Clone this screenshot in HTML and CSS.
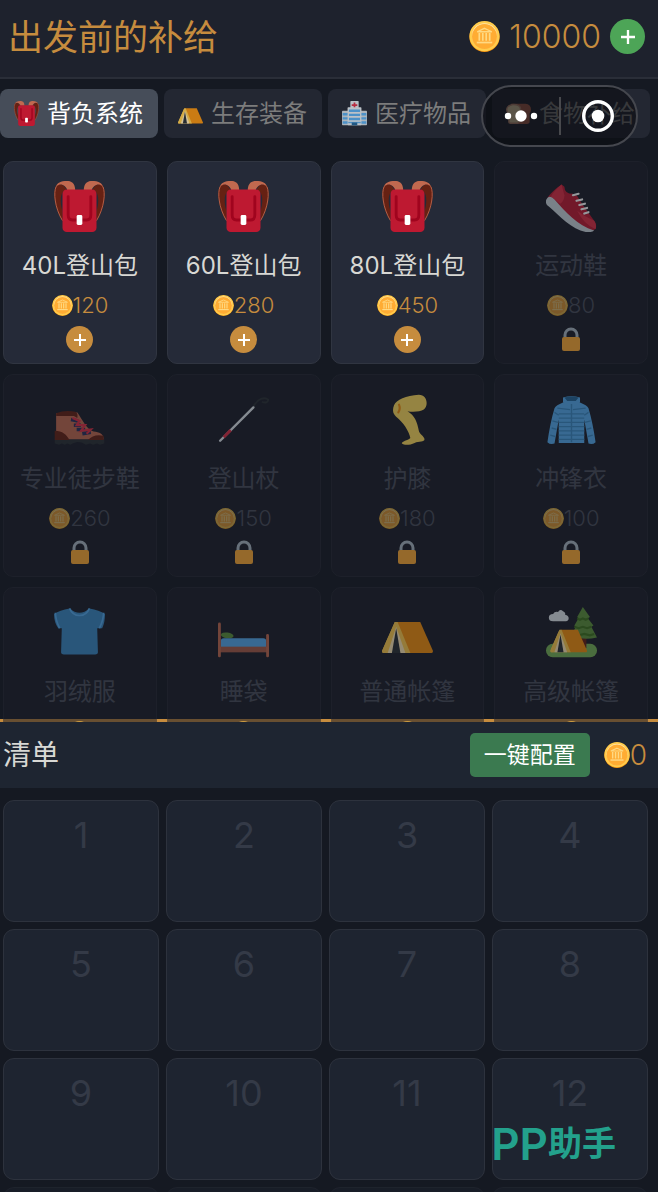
FILE: index.html
```html
<!DOCTYPE html>
<html lang="zh-CN">
<head>
    <meta charset="UTF-8">
    <meta name="viewport" content="width=device-width, initial-scale=1.0">
    <title>出发前的补给</title>
    <link rel="stylesheet" href="styles.css">
</head>
<body>
    <!-- Icon sprite -->
    <svg class="sprite" aria-hidden="true">
        <symbol id="coin" viewBox="0 0 36 36">
            <circle cx="18" cy="18.5" r="17.5" fill="#F4900C"/>
            <circle cx="18" cy="17.5" r="17.5" fill="#FFCC4D"/>
            <circle cx="18" cy="17" r="14.5" fill="#FFE8B6"/>
            <circle cx="18" cy="18" r="14.5" fill="#FFAC33"/>
            <path d="M18 8.5l8.5 4h-17z" fill="none" stroke="#FFD983" stroke-width="1.5"/>
            <path d="M12 14v9M16 14v9M20 14v9M24 14v9" stroke="#FFD983" stroke-width="2"/>
            <path d="M9 25h18" stroke="#FFD983" stroke-width="2"/>
        </symbol>
        <symbol id="strap" viewBox="0 0 36 36">
            <path d="M2 3C0 5 0 10 .5 13C1.5 20 4 25 6 28V21C4.500 17 4 10 6.500 7.500L9 7C8 3 4 1 2 3z" fill="#662113"/>
            <path d="M1 5C2 1 5 0 9 0C12 0 15 1 15 7H9.500C9 4 6 2 4 2.500Q2 3 1 5z" fill="#C1694F"/>
            <path d="M1.500 4C-.5 8 .5 19 6 28" fill="none" stroke="#C1694F" stroke-width=".6"/>
        </symbol>
        <symbol id="backpack" viewBox="0 0 36 36">
            <use href="#strap" width="36" height="36"/>
            <g transform="translate(36 0) scale(-1 1)"><use href="#strap" width="36" height="36"/></g>
            <rect x="6" y="6" width="24" height="30" rx="3" fill="#BE1931"/>
            <path d="M10 11v13q0 3.500 3 3.500h10q3 0 3-3.500V11" fill="none" stroke="#A0041E" stroke-width="2" stroke-linecap="round"/>
            <rect x="16" y="24" width="4" height="7" rx="1" fill="#fff"/>
        </symbol>
        <symbol id="tent" viewBox="0 0 36 36">
            <path d="M10 10.500h17L36 31q0 1.500-1 1.500H17z" fill="#F4900C"/>
            <path d="M9 10.500h2L20 32.500H1Q0 32.500 0 31z" fill="#FFCC4D"/>
            <path d="M10 14L4 32.500h12.500z" fill="#FFE8B6"/>
            <path d="M10 15L7 32.500h6z" fill="#292F33"/>
            <path d="M9 10.500L0 31q0 1.500 1 1.500h2.500L10 13z" fill="#FFCC4D"/>
        </symbol>
        <symbol id="hospital" viewBox="0 0 36 36">
            <rect x="12" y="0" width="12" height="12" rx="1" fill="#E1E8ED"/>
            <path d="M18 2v8M14 6h8" stroke="#DD2E44" stroke-width="2.500"/>
            <rect x="0" y="14" width="36" height="21" rx="1" fill="#CCD6DD"/>
            <rect x="8" y="9" width="20" height="26" rx="1" fill="#E1E8ED"/>
            <path d="M10 14h16M10 20h16M10 26h16M1 19h7M1 25h7M1 31h7M28 19h7M28 25h7M28 31h7" stroke="#55ACEE" stroke-width="3.400"/>
            <rect x="9" y="30" width="18" height="2" fill="#5DADEC"/>
            <rect x="14" y="31" width="8" height="4" fill="#226699"/>
        </symbol>
        <symbol id="bread" viewBox="0 0 36 36">
            <path d="M7 4H28Q36 5 36 12Q36 16 34 18V30Q34 33 30 33H10z" fill="#C1694F"/>
            <path d="M10 4Q22 4 22 12Q22 16 20 18V30Q20 33 17 33H6Q3 33 3 30V19Q0 17 0 12Q1 5 10 4z" fill="#D99E82"/>
            <path d="M10 6Q20 6 20 12Q20 15 18 17V29Q18 31 16 31H7Q5 31 5 29V18Q2 16 2 12Q3 7 10 6z" fill="#FFE8B6"/>
        </symbol>
        <symbol id="sneaker" viewBox="0 0 36 36">
            <path d="M11 2.500C7 5 3 9 1 12C8 20 20 34 33 35C36 34 36 31 34 28L26 17L22 10.500L19 9Q13 9 13 4z" fill="#BE1931"/>
            <path d="M11 2.500C8 5 5 8 3.500 11L10 16Q13 14 13 10z" fill="#DD2E44"/>
            <path d="M22 21Q27 25 34 28Q36 31 35 34Q27 31 22 21z" fill="#DD2E44"/>
            <path d="M1 12C-1 14 0 17 2 18C10 25 18 34 28 36Q32 36.500 34 35C22 31 14 22 6 13Q3 10 1 12z" fill="#CCD6DD"/>
            <path d="M19 10l4-1M21.500 14l4-1M23.500 17l4-1M25 20l4-1M27 23l3-1" stroke="#fff" stroke-width="1.500" stroke-linecap="round"/>
        </symbol>
        <symbol id="boot" viewBox="0 0 36 36">
            <path d="M.5 32h35v3l-3 .8-2-.8-3 .8-2-.8-3 .8-3-1.500-3-.5-3 1-2 1-2-.8-2 .8-2-.8-2 .8-3-.8z" fill="#292F33"/>
            <path d="M1.500 13.500V32H35C35 28 32 27 28 26.500C23 25 20 18 16.500 13z" fill="#C1694F"/>
            <path d="M1.500 13.500Q8 11 15 12.500Q17 13 16.500 17L14 15.500H1.500zM.5 26C6 26 9 29 11 32.500H.5zM24 32.500Q28 28 35 29.500V32.500z" fill="#662113"/>
            <path d="M12 18l5 1M14 22l5 0M16 25l6 0M20 28l6-1" stroke="#292F5B" stroke-width="2.500"/>
            <path d="M13 17l5 2-2 3 6 0-3 4 7-1-3 3" fill="none" stroke="#DD2E44" stroke-width="1.500"/>
        </symbol>
        <symbol id="cane" viewBox="0 0 36 36">
            <path d="M25 9C28 3 33 2 35.500 4Q35 7 31 5.500" fill="none" stroke="#292F33" stroke-width="1.300"/>
            <path d="M1.500 33L25 9.500" stroke="#E1E8ED" stroke-width="1.700" stroke-linecap="round"/>
            <path d="M4 30.500L9 25.500" stroke="#DD2E44" stroke-width="2"/>
        </symbol>
        <symbol id="leg" viewBox="0 0 36 36">
            <path d="M26 .5C17 1 10 4 8.500 8C7 12 8 14 10 16C15 20 19 26 20 31C18 33 14 33 14 35C16 36.500 20 36 23 34.500C26 33.500 30 34 30 32C30 30 26 28 26 26C25 20 23 15 18 12.200C22 13 27 12.500 29.500 11C33 8 32 .5 26 .5z" fill="#FFDC5D"/>
            <path d="M12 7.500q1.200 3-.5 5.500" fill="none" stroke="#F4900C" stroke-width="1.500" stroke-linecap="round"/>
        </symbol>
        <symbol id="jacket" viewBox="0 0 36 36">
            <path d="M12 6Q7 8 6 10Q3 20 1 34Q3 36 6 35L9 18V34.500H27V18L30 35Q33 36 35 34Q33 20 30 10Q29 8 24 6z" fill="#55ACEE"/>
            <path d="M12 2.500Q18 .5 24 2.500V6Q18 11 12 6z" fill="#55ACEE"/>
            <path d="M13 2.500Q18 1 23 2.500L21 5H15z" fill="#226699"/>
            <path d="M18 7V34M8 10l9 1M19 11l9-1M9 14h18M9 17h18M9 20h18M9 23h18M9 26h18M9 29h18M9 32h18M6 13l3 2M4.500 19l4 1M4 24l3.500 1M3 29l3.500 1M30 13l-3 2M31.500 19l-4 1M32 24l-3.500 1M33 29l-3.500 1" stroke="#3B88C3" stroke-width="1"/>
        </symbol>
        <symbol id="shirt" viewBox="0 0 36 36">
            <path d="M11 1Q18 7 25 1Q32 2 36 5Q36 11 34 15H30.500L31 32Q31 33.500 29 33.500H7Q5 33.500 5 32L5.500 15H3Q0 11 0 5Q4 2 11 1z" fill="#3B88C3"/>
            <path d="M11 1Q13 6 18 6Q23 6 25 1M1 4Q1 9 4 15M35 4Q35 9 32 15" fill="none" stroke="#55ACEE" stroke-width="1.200"/>
        </symbol>
        <symbol id="bed" viewBox="0 0 36 36">
            <ellipse cx="6.500" cy="20" rx="4.500" ry="2" fill="#5C913B" transform="rotate(8 6.500 20)"/>
            <path d="M2 24q0-2 2-2h28q2 0 2 2v5H2z" fill="#55ACEE"/>
            <rect x="1" y="28" width="34" height="4" fill="#A85B47"/>
            <rect x="0" y="11" width="2" height="24.500" rx="1" fill="#C1694F"/>
            <rect x="34" y="19" width="2" height="16.500" rx="1" fill="#C1694F"/>
        </symbol>
        <symbol id="camping" viewBox="0 0 36 36">
            <rect x="0" y="26" width="36" height="9.500" rx="4.700" fill="#77B255"/>
            <rect x="25" y="20" width="3.500" height="9" fill="#662113"/>
            <path d="M26 0l5 7-1.500 1 4 5-1.500 1 4 7.500Q26 24 18 20l3-6-1-1 3-5-1-1z" fill="#5C913B"/>
            <path d="M22 8l2 1 2-1 2 1 2-1M20 14l3 1 3-1 3 1 3-1M19 19l4 1 4-1 4 1 3-1" fill="none" stroke="#3E721D" stroke-width="1.500"/>
            <path d="M5 10Q2 10 2 7.500Q2 5 5 5Q6 3 8.500 3.500Q10 1 12 3Q14 4 13.500 5.500Q16 6 16 8Q16 10 14 10z" fill="#E1E8ED"/>
            <use href="#tent" x="3" y="8.500" width="26" height="26"/>
        </symbol>
        <symbol id="lock" viewBox="0 0 20 26">
            <path d="M4 12V8a6 6 0 0 1 12 0v4" fill="none" stroke="#AAB8C2" stroke-width="3"/>
            <rect x="1" y="10" width="18" height="14" rx="2" fill="#FFAC33"/>
        </symbol>
        <symbol id="plus" viewBox="0 0 12 12">
            <path d="M6 0v12M0 6h12" stroke="#fff" stroke-width="2"/>
        </symbol>
    </svg>

    <div class="app">
        <header class="top-bar">
            <h1>出发前的补给</h1>
            <div class="wallet">
                <svg class="wallet-coin"><use href="#coin"/></svg>
                <span class="wallet-amount">10000</span>
                <button class="recharge" aria-label="充值"><svg><use href="#plus"/></svg></button>
            </div>
        </header>

        <nav class="tabs">
            <button class="tab active"><svg><use href="#backpack"/></svg>背负系统</button>
            <button class="tab"><svg><use href="#tent"/></svg>生存装备</button>
            <button class="tab"><svg><use href="#hospital"/></svg>医疗物品</button>
            <button class="tab"><svg><use href="#bread"/></svg>食物补给</button>
        </nav>

        <main class="shop">
            <div class="item">
                <svg class="item-icon"><use href="#backpack"/></svg>
                <div class="item-name">40L登山包</div>
                <div class="price"><svg><use href="#coin"/></svg>120</div>
                <button class="add" aria-label="添加"><svg><use href="#plus"/></svg></button>
            </div>
            <div class="item">
                <svg class="item-icon"><use href="#backpack"/></svg>
                <div class="item-name">60L登山包</div>
                <div class="price"><svg><use href="#coin"/></svg>280</div>
                <button class="add" aria-label="添加"><svg><use href="#plus"/></svg></button>
            </div>
            <div class="item">
                <svg class="item-icon"><use href="#backpack"/></svg>
                <div class="item-name">80L登山包</div>
                <div class="price"><svg><use href="#coin"/></svg>450</div>
                <button class="add" aria-label="添加"><svg><use href="#plus"/></svg></button>
            </div>
            <div class="item locked">
                <svg class="item-icon"><use href="#sneaker"/></svg>
                <div class="item-name">运动鞋</div>
                <div class="price"><svg><use href="#coin"/></svg>80</div>
                <svg class="lock"><use href="#lock"/></svg>
            </div>

            <div class="item locked">
                <svg class="item-icon"><use href="#boot"/></svg>
                <div class="item-name">专业徒步鞋</div>
                <div class="price"><svg><use href="#coin"/></svg>260</div>
                <svg class="lock"><use href="#lock"/></svg>
            </div>
            <div class="item locked">
                <svg class="item-icon"><use href="#cane"/></svg>
                <div class="item-name">登山杖</div>
                <div class="price"><svg><use href="#coin"/></svg>150</div>
                <svg class="lock"><use href="#lock"/></svg>
            </div>
            <div class="item locked">
                <svg class="item-icon"><use href="#leg"/></svg>
                <div class="item-name">护膝</div>
                <div class="price"><svg><use href="#coin"/></svg>180</div>
                <svg class="lock"><use href="#lock"/></svg>
            </div>
            <div class="item locked">
                <svg class="item-icon"><use href="#jacket"/></svg>
                <div class="item-name">冲锋衣</div>
                <div class="price"><svg><use href="#coin"/></svg>100</div>
                <svg class="lock"><use href="#lock"/></svg>
            </div>

            <div class="item locked">
                <svg class="item-icon"><use href="#shirt"/></svg>
                <div class="item-name">羽绒服</div>
                <div class="price"><svg><use href="#coin"/></svg></div>
            </div>
            <div class="item locked">
                <svg class="item-icon"><use href="#bed"/></svg>
                <div class="item-name">睡袋</div>
                <div class="price"><svg><use href="#coin"/></svg></div>
            </div>
            <div class="item locked">
                <svg class="item-icon"><use href="#tent"/></svg>
                <div class="item-name">普通帐篷</div>
                <div class="price"><svg><use href="#coin"/></svg></div>
            </div>
            <div class="item locked">
                <svg class="item-icon"><use href="#camping"/></svg>
                <div class="item-name">高级帐篷</div>
                <div class="price"><svg><use href="#coin"/></svg></div>
            </div>
        </main>

        <section class="list">
            <div class="list-head">
                <h2>清单</h2>
                <button class="auto-fill">一键配置</button>
                <div class="total"><svg><use href="#coin"/></svg>0</div>
            </div>
            <div class="slots">
                <div class="slot">1</div>
                <div class="slot">2</div>
                <div class="slot">3</div>
                <div class="slot">4</div>
                <div class="slot">5</div>
                <div class="slot">6</div>
                <div class="slot">7</div>
                <div class="slot">8</div>
                <div class="slot">9</div>
                <div class="slot">10</div>
                <div class="slot">11</div>
                <div class="slot">12</div>
                <div class="slot closed"></div>
                <div class="slot closed"></div>
                <div class="slot closed"></div>
                <div class="slot closed"></div>
            </div>
        </section>
    </div>

    <!-- Mini-program capsule -->
    <div class="capsule">
        <button aria-label="更多">
            <svg class="dots" viewBox="0 0 34 12">
                <circle cx="4" cy="6" r="3.200" fill="#fff"/>
                <circle cx="17" cy="6" r="5.700" fill="#fff"/>
                <circle cx="30" cy="6" r="3.200" fill="#fff"/>
            </svg>
        </button>
        <span class="divider"></span>
        <button aria-label="关闭">
            <svg class="target" viewBox="0 0 32 32">
                <circle cx="16" cy="16" r="14.300" fill="none" stroke="#fff" stroke-width="3.400"/>
                <circle cx="16" cy="16" r="6.300" fill="#fff"/>
            </svg>
        </button>
    </div>

    <div class="watermark"><span class="brand">PP</span>助手</div>
</body>
</html>
```
FILE: styles.css
```css
* {
    box-sizing: border-box;
}
body {
    margin: 0;
    background-color: #151922;
    color: #d8d8d4;
    font-family: Inter, "Noto Sans CJK SC", sans-serif;
}
button {
    border: none;
    padding: 0;
    font-family: inherit;
    cursor: pointer;
}
h1, h2 {
    margin: 0;
    font-weight: normal;
}
svg {
    display: block;
    flex: none;
}
.sprite {
    position: absolute;
    width: 0;
    height: 0;
}
.app {
    display: flex;
    flex-direction: column;
    height: 100vh;
    overflow: hidden;
}

/* Header */
.top-bar {
    display: flex;
    justify-content: space-between;
    align-items: center;
    height: 79px;
    flex: none;
    padding: 0 13px 4px 8px;
    background-color: #1e222d;
    border-bottom: 2px solid #2a2e38;
    color: #c68c3e;
}
.top-bar h1 {
    font-size: 35px;
    line-height: 48px;
}
.wallet {
    display: flex;
    align-items: center;
    gap: 9px;
}
.wallet-coin {
    width: 31px;
    height: 31px;
}
.wallet-amount {
    font-size: 32px;
    font-weight: 300;
    line-height: 40px;
}
.recharge {
    display: flex;
    justify-content: center;
    align-items: center;
    width: 35px;
    height: 35px;
    border-radius: 50%;
    background-color: #4da557;
}
.recharge svg {
    width: 14px;
    height: 14px;
}

/* Category tabs */
.tabs {
    display: grid;
    grid-template-columns: repeat(4, 1fr);
    gap: 6px;
    flex: none;
    padding: 10px 8px 0 0;
}
.tab {
    display: flex;
    align-items: center;
    gap: 8px;
    height: 49px;
    padding: 0 0 0 14px;
    border-radius: 8px;
    background-color: #232732;
    color: #7c7c7c;
    font-size: 24px;
    line-height: 32px;
    white-space: nowrap;
}
.tab svg {
    width: 25px;
    height: 25px;
    opacity: 0.8;
}
.tab.active {
    background-color: #464d59;
    color: #fff;
}
.tab.active svg {
    opacity: 1;
}

/* Shop items, the gold rule runs under the cards */
.shop {
    display: grid;
    grid-template-columns: repeat(4, 1fr);
    grid-auto-rows: 203px;
    gap: 10px;
    flex: 1;
    min-height: 0;
    margin-top: 8px;
    padding: 15px 10px 0 3px;
    overflow: hidden;
    background: linear-gradient(#c68c3e, #c68c3e) bottom / 100% 3px no-repeat;
}
.item {
    display: flex;
    flex-direction: column;
    align-items: center;
    padding-top: 19px;
    border: 1px solid #303541;
    border-radius: 10px;
    background-color: #252a38;
}
.item-icon {
    width: 51px;
    height: 51px;
}
.item-name {
    margin-top: 18px;
    font-size: 24px;
    line-height: 32px;
    white-space: nowrap;
}
.price {
    display: flex;
    align-items: center;
    min-height: 24px;
    margin-top: 11px;
    color: #c68c3e;
    font-size: 22px;
    font-weight: 300;
    line-height: 24px;
}
.price svg {
    width: 21px;
    height: 21px;
}
.add {
    display: flex;
    justify-content: center;
    align-items: center;
    width: 27px;
    height: 27px;
    margin-top: 9px;
    border-radius: 50%;
    background-color: #c68c3e;
}
.add svg {
    width: 12px;
    height: 12px;
}
.lock {
    width: 20px;
    height: 26px;
    margin-top: 10px;
}
.item.locked {
    background-color: #1c1e28;
    border-color: #242731;
    color: #484d5a;
    opacity: 0.55;
}
.locked .price {
    color: #484d5a;
}
.locked .price svg {
    opacity: 0.8;
}

/* Packing list */
.list {
    flex: none;
}
.list-head {
    display: flex;
    align-items: center;
    height: 66px;
    padding: 0 11px 0 3px;
    background-color: #1e2531;
}
.list-head h2 {
    flex: 1;
    font-size: 28px;
    line-height: 40px;
}
.auto-fill {
    height: 44px;
    padding: 0 14px;
    border-radius: 5px;
    background-color: #3b7a50;
    color: #fff;
    font-size: 23px;
    line-height: 32px;
}
.total {
    display: flex;
    align-items: center;
    margin-left: 14px;
    color: #c68c3e;
    font-size: 28px;
    font-weight: 300;
    line-height: 32px;
}
.total svg {
    width: 26px;
    height: 26px;
}
.slots {
    display: grid;
    grid-template-columns: repeat(4, 1fr);
    grid-auto-rows: 122px;
    gap: 7px;
    height: 404px;
    padding: 12px 10px 0 3px;
    overflow: hidden;
}
.slot {
    padding-top: 10px;
    border: 1px solid #2d323d;
    border-radius: 11px;
    background-color: #1e2430;
    color: #343a47;
    font-size: 36px;
    line-height: 48px;
    text-align: center;
}
.slot.closed {
    opacity: 0.4;
}

/* Floating layers */
.capsule {
    position: absolute;
    top: 85px;
    right: 20px;
    display: flex;
    align-items: center;
    width: 157px;
    height: 62px;
    border: 2px solid #45474e;
    border-radius: 31px;
    background-color: rgba(10, 12, 16, 0.6);
}
.capsule button {
    display: flex;
    flex: 1;
    justify-content: center;
    background: none;
}
.dots {
    width: 34px;
    height: 12px;
}
.target {
    width: 32px;
    height: 32px;
}
.divider {
    width: 2px;
    height: 38px;
    background-color: #48494d;
}
.watermark {
    position: absolute;
    right: 42px;
    bottom: 24px;
    display: flex;
    align-items: center;
    color: #23a18c;
    font-size: 34px;
    font-weight: bold;
    line-height: 48px;
}
.brand {
    font-size: 44px;
    font-weight: 600;
}
```
